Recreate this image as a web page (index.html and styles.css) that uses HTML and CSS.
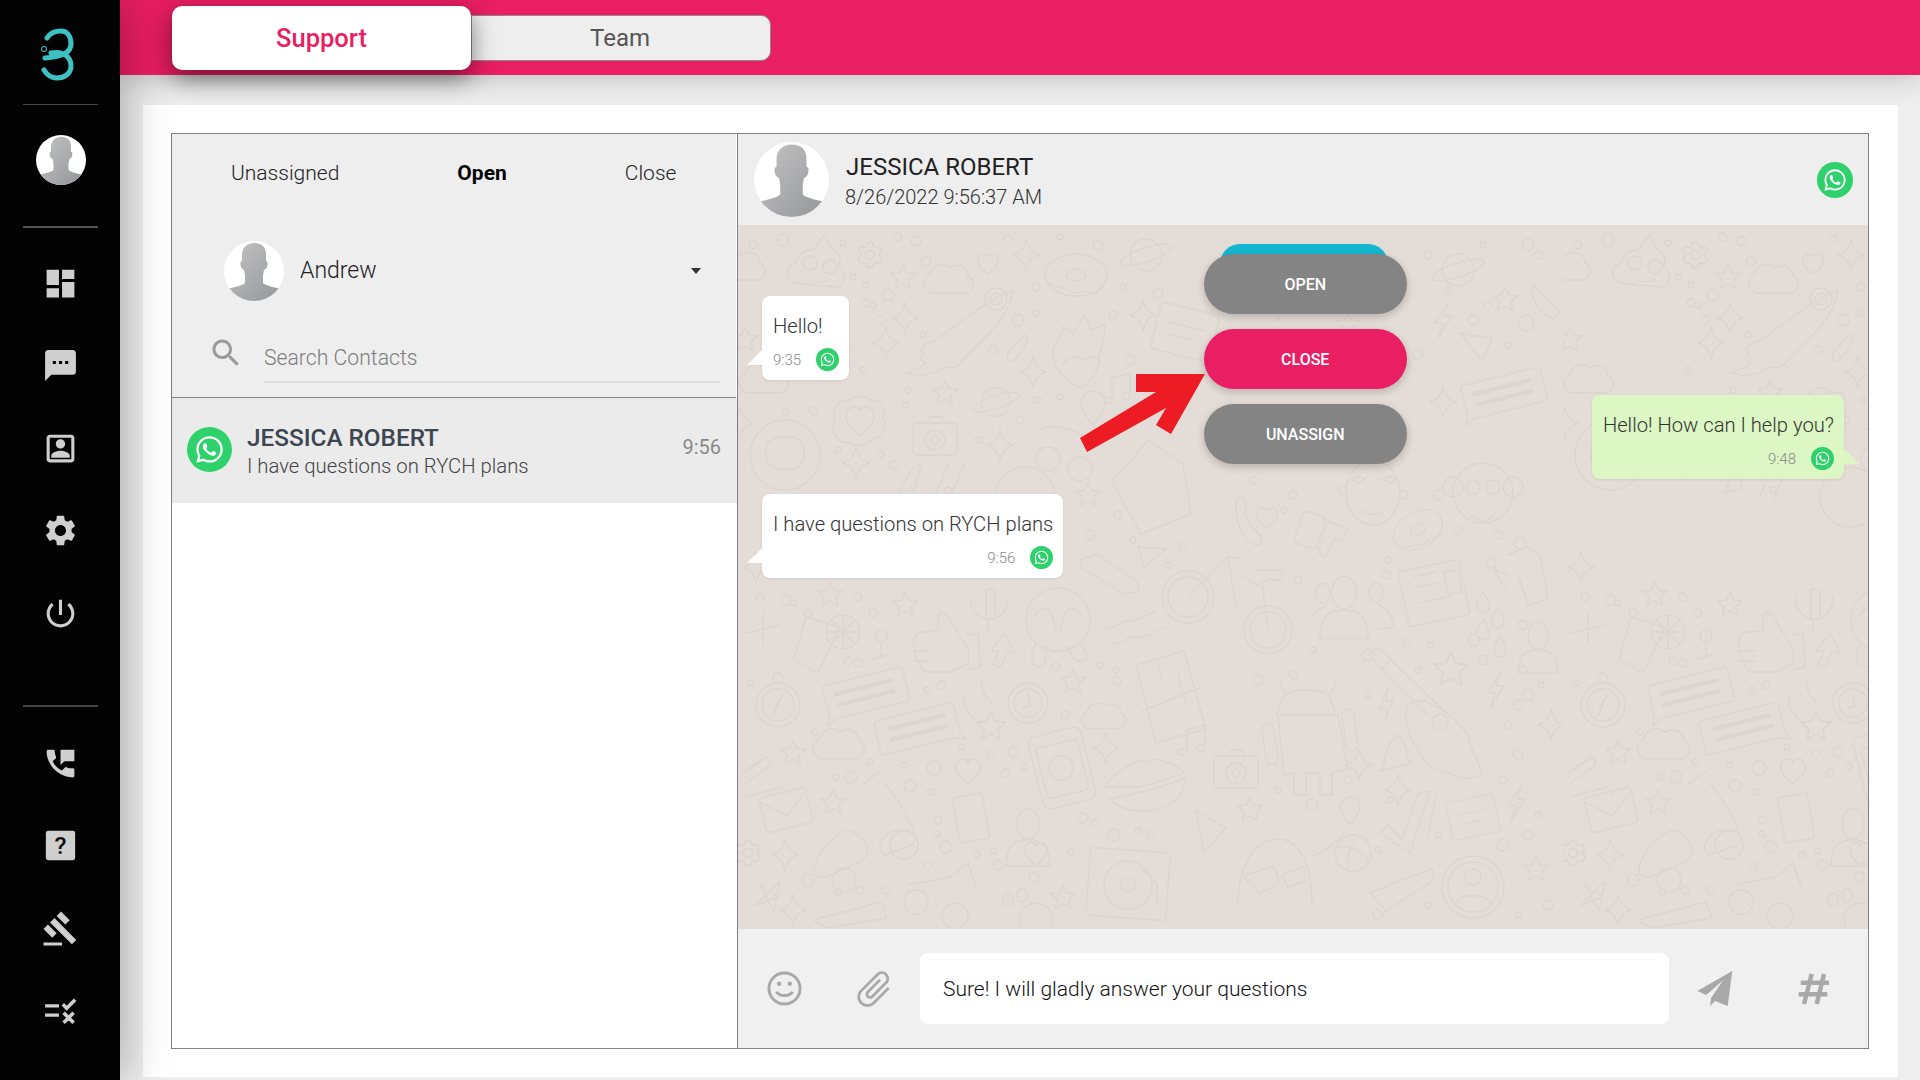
FILE: index.html
```html
<!DOCTYPE html>
<html lang="en">
<head>
    <meta charset="UTF-8">
    <meta name="viewport" content="width=device-width, initial-scale=1.0">
    <title>Support Chat</title>
    <link rel="stylesheet" href="styles.css">
</head>
<body>

    <!-- shared icons -->
    <svg class="defs" width="0" height="0" aria-hidden="true">
        <defs>
            <linearGradient id="silhouette" x1="0" y1="0" x2="1" y2="1">
                <stop offset="0" stop-color="#c4c4c4"/>
                <stop offset="1" stop-color="#929396"/>
            </linearGradient>
            <clipPath id="avatarClip"><circle cx="30" cy="30" r="30"/></clipPath>
            <symbol id="avatar" viewBox="0 0 60 60">
                <circle cx="30" cy="30" r="30" fill="#fff"/>
                <g clip-path="url(#avatarClip)" fill="url(#silhouette)">
                    <path d="M18 14c0-8 6-12 12-12 8 0 12 4 12 12 0 2 0 4 0 6 2 0 2 3 1 6-1 2-2 2-3 3-1 4-1 6-1 8v5c2 2 8 4 19 6v18H2V48c11-2 17-4 19-6v-5c0-2 0-4-1-8-1-1-2-1-3-3-1-3-1-6 1-6z"/>
                </g>
            </symbol>
            <symbol id="whatsapp" viewBox="0 0 44 44">
                <circle cx="22" cy="22" r="22" fill="#2fd16c"/>
                <path transform="translate(9 9) scale(1.083)" fill="#fff" d="M17.472 14.382c-.297-.149-1.758-.867-2.03-.967-.273-.099-.471-.148-.67.15-.197.297-.767.966-.94 1.164-.173.199-.347.223-.644.075-.297-.15-1.255-.463-2.39-1.475-.883-.788-1.48-1.761-1.653-2.059-.173-.297-.018-.458.13-.606.134-.133.298-.347.446-.52.149-.174.198-.298.298-.497.099-.198.05-.371-.025-.52-.075-.149-.669-1.612-.916-2.207-.242-.579-.487-.5-.669-.51-.173-.008-.371-.01-.57-.01-.198 0-.52.074-.792.372-.272.297-1.04 1.016-1.04 2.479 0 1.462 1.065 2.875 1.213 3.074.149.198 2.096 3.2 5.077 4.487.709.306 1.262.489 1.694.625.712.227 1.36.195 1.871.118.571-.085 1.758-.719 2.006-1.413.248-.694.248-1.289.173-1.413-.074-.124-.272-.198-.57-.347m-5.421 7.403h-.004a9.87 9.87 0 01-5.031-1.378l-.361-.214-3.741.982.998-3.648-.235-.374a9.86 9.86 0 01-1.51-5.26c.001-5.45 4.436-9.884 9.888-9.884 2.64 0 5.122 1.03 6.988 2.898a9.825 9.825 0 012.893 6.994c-.003 5.45-4.437 9.884-9.885 9.884m8.413-18.297A11.815 11.815 0 0012.05 0C5.495 0 .16 5.335.157 11.892c0 2.096.547 4.142 1.588 5.945L.057 24l6.305-1.654a11.882 11.882 0 005.683 1.448h.005c6.554 0 11.89-5.335 11.893-11.893a11.821 11.821 0 00-3.48-8.413z"/>
            </symbol>
            <path id="gearPath" d="M19.14 12.94c.04-.3.06-.61.06-.94 0-.32-.02-.64-.07-.94l2.03-1.58a.49.49 0 0 0 .12-.61l-1.92-3.32a.488.488 0 0 0-.59-.22l-2.39.96c-.5-.38-1.03-.7-1.62-.94l-.36-2.54a.484.484 0 0 0-.48-.41h-3.84c-.24 0-.43.17-.47.41l-.36 2.54c-.59.24-1.13.57-1.62.94l-2.39-.96c-.22-.08-.47 0-.59.22L2.74 8.87c-.12.21-.08.47.12.61l2.03 1.58c-.05.3-.09.63-.09.94s.02.64.07.94l-2.03 1.58a.49.49 0 0 0-.12.61l1.92 3.32c.12.22.37.29.59.22l2.39-.96c.5.38 1.03.7 1.62.94l.36 2.54c.05.24.24.41.48.41h3.84c.24 0 .44-.17.47-.41l.36-2.54c.59-.24 1.13-.56 1.62-.94l2.39.96c.22.08.47 0 .59-.22l1.92-3.32c.12-.22.07-.47-.12-.61l-2.01-1.58zM12 15.6c-1.98 0-3.6-1.62-3.6-3.6s1.62-3.6 3.6-3.6 3.6 1.62 3.6 3.6-1.62 3.6-3.6 3.6z"/>
        </defs>
    </svg>

    <aside class="sidebar">
        <div class="logo">
            <svg width="120" height="104" viewBox="0 0 120 104" fill="none" stroke="#3cc2c2" stroke-width="5" stroke-linecap="round">
                <path d="M47 38c3-5 9-7 14-7 6 0 10 5 10 13 0 9-10 13-26 14"/>
                <path d="M51 53c10-2 20 2 20 13 0 8-7 12-14 12-5 0-10-3-13-8"/>
                <circle cx="44" cy="49" r=".5"/>
            </svg>
        </div>
        <div class="side-avatar">
            <svg class="avatar-50"><use href="#avatar"/></svg>
        </div>
        <nav class="nav-top">
            <a class="nav-item"><svg class="nav-icon" viewBox="0 0 24 24"><path d="M3 13h8V3H3v10zm0 8h8v-6H3v6zm10 0h8V11h-8v10zm0-18v6h8V3h-8z"/></svg></a>
            <a class="nav-item"><svg class="nav-icon" viewBox="0 0 24 24"><path d="M20 2H4c-1.1 0-1.99.9-1.99 2L2 22l4-4h14c1.1 0 2-.9 2-2V4c0-1.1-.9-2-2-2zM9 11H7V9h2v2zm4 0h-2V9h2v2zm4 0h-2V9h2v2z"/></svg></a>
            <a class="nav-item"><svg class="nav-icon" viewBox="0 0 24 24"><path d="M19 5v14H5V5h14m0-2H5c-1.11 0-2 .9-2 2v14c0 1.1.89 2 2 2h14c1.1 0 2-.9 2-2V5c0-1.1-.9-2-2-2zm-7 9c1.65 0 3-1.35 3-3s-1.35-3-3-3-3 1.35-3 3 1.35 3 3 3zm-6 6h12v-1.5c0-2-4-3.1-6-3.1s-6 1.1-6 3.1V18z"/></svg></a>
            <a class="nav-item"><svg class="nav-icon" viewBox="0 0 24 24"><use href="#gearPath"/></svg></a>
            <a class="nav-item"><svg class="nav-icon" viewBox="0 0 24 24"><path d="M13 3h-2v10h2V3zm4.83 2.17l-1.42 1.42C17.99 7.86 19 9.81 19 12c0 3.87-3.13 7-7 7s-7-3.13-7-7c0-2.19 1.01-4.14 2.58-5.42L6.17 5.17C4.23 6.82 3 9.26 3 12c0 4.97 4.03 9 9 9s9-4.03 9-9c0-2.74-1.23-5.18-3.17-6.83z"/></svg></a>
        </nav>
        <nav class="nav-bottom">
            <a class="nav-item"><svg class="nav-icon" viewBox="0 0 24 24"><path d="M6.9 10.6c1.3 2.6 3.4 4.7 6 6l2-2c.3-.3.7-.4 1-.2 1 .4 2.5 1 4.1.6.6 0 1 .4 1 1V20c0 .6-.4 1-1 1C10.9 21 3 13.1 3 4c0-.6.4-1 1-1h3.3c.6 0 1 .4 1 1 0 1.500.5 2.700.8 3.800.1.300 0 .700-.200 1zM12 3h9v7.500h-6.500L12 13z"/></svg></a>
            <a class="nav-item"><svg class="nav-icon" viewBox="0 0 24 24"><rect x="2.500" y="2.500" width="19" height="19" rx="1.500"/><text class="help-mark" x="12" y="17.500" text-anchor="middle">?</text></svg></a>
            <a class="nav-item"><svg class="nav-icon" viewBox="0 0 24 24"><path d="M1 21h12v2H1v-2zM5.245 8.070l2.830-2.827 14.140 14.142-2.828 2.828L5.245 8.070zM12.317 1l5.657 5.656-2.830 2.830-5.654-5.660L12.317 1zM3.825 9.485l5.657 5.657-2.828 2.828-5.657-5.657 2.828-2.828z"/></svg></a>
            <a class="nav-item"><svg class="nav-icon" viewBox="0 0 24 24"><path d="M2 8h9v2H2zM2 14h9v2H2z"/><path class="tick" d="M13.500 8l2.500 2.500 5.500-5.500M14 13.500l6.500 6.500M20.500 13.500L14 20"/></svg></a>
        </nav>
    </aside>

    <main class="main">
        <header class="topbar">
            <button class="top-tab active">Support</button>
            <button class="top-tab">Team</button>
        </header>

        <div class="content">
            <div class="card">
                <div class="panel">

                    <section class="contacts">
                        <div class="contacts-head">
                            <div class="status-tabs">
                                <span>Unassigned</span>
                                <span class="current">Open</span>
                                <span>Close</span>
                            </div>
                            <div class="agent">
                                <svg class="avatar-60"><use href="#avatar"/></svg>
                                <span class="agent-name">Andrew</span>
                                <span class="caret"></span>
                            </div>
                            <div class="search">
                                <svg class="search-icon" viewBox="0 0 24 24"><path d="M15.500 14h-.790l-.280-.270C15.410 12.590 16 11.110 16 9.500 16 5.910 13.090 3 9.500 3S3 5.910 3 9.500 5.910 16 9.500 16c1.610 0 3.090-.590 4.230-1.570l.270.280v.790l5 4.990L20.490 19l-4.990-5zm-6 0C7.010 14 5 11.990 5 9.500S7.010 5 9.500 5 14 7.010 14 9.500 11.990 14 9.500 14z"/></svg>
                                <div class="search-box">Search Contacts</div>
                            </div>
                        </div>
                        <div class="contact-row">
                            <svg class="wa-45"><use href="#whatsapp"/></svg>
                            <div class="contact-text">
                                <div class="contact-name">JESSICA ROBERT</div>
                                <div class="contact-last">I have questions on RYCH plans</div>
                            </div>
                            <div class="contact-time">9:56</div>
                        </div>
                    </section>

                    <section class="conversation">
                        <div class="chat-head">
                            <svg class="avatar-75"><use href="#avatar"/></svg>
                            <div class="chat-title">
                                <div class="chat-name">JESSICA ROBERT</div>
                                <div class="chat-date">8/26/2022 9:56:37 AM</div>
                            </div>
                            <svg class="wa-36"><use href="#whatsapp"/></svg>
                        </div>

                        <div class="chat-body">
                            <svg class="wallpaper" aria-hidden="true">
                                <defs>
                                    <path id="dStar" d="M0-13L3.500-4.900 12.400-4 5.700 1.900 7.600 10.500 0 6-7.600 10.500-5.700 1.900-12.400-4-3.500-4.900z"/>
                                    <path id="dSpark" d="M0-16Q2-3 13 0 2 3 0 16-2 3-13 0-2-3 0-16z"/>
                                    <path id="dCloud" d="M-18 13a10 10 0 0 1-2-19 12 12 0 0 1 20-6 11 11 0 0 1 18 8 9 9 0 0 1-2 17z"/>
                                    <path id="dHeart" d="M0 11C-16 0-10-11-3-9-1-8.500 0-7 0-6 0-7 1-8.500 3-9 10-11 16 0 0 11z"/>
                                    <g id="dPlanet"><circle r="16"/><ellipse rx="27" ry="7" transform="rotate(-18)"/></g>
                                    <g id="dBubble"><path d="M-38-17H38a4 4 0 0 1 4 4V14a4 4 0 0 1-4 4H-34l-10 5 4-9V-13a4 4 0 0 1 2-4z"/><path d="M-28-6H28M-28 5H28" stroke-width="4.500"/></g>
                                    <g id="dEnvelope"><rect x="-24" y="-18" width="48" height="36" rx="3"/><path d="M-24-14 0 6 24-14"/></g>
                                    <g id="dCamera"><rect x="-22" y="-14" width="44" height="32" rx="4"/><circle cy="3" r="10"/><circle cy="3" r="4"/><path d="M-8-14l3-6H7l3 6"/></g>
                                    <g id="dClock"><circle r="20"/><circle r="14"/><path d="M0-10 2 3-5 5"/></g>
                                    <g id="dCompass"><circle r="22"/><circle r="16"/><circle cy="-27" r="5"/><path d="M5-11-5 11-1-2z"/></g>
                                    <g id="dGear"><use href="#gearPath" transform="scale(1.300) translate(-12 -12)"/></g>
                                    <g id="dDonut"><ellipse rx="31" ry="21"/><ellipse rx="10" ry="6"/><path d="M-30 4c6 12 16 4 22 12 8 6 14-4 22 2 8 2 14-6 16-16"/></g>
                                    <g id="dCard"><rect x="-30" y="-24" width="60" height="48" rx="4"/><path d="M-18-6H18M-18 6H8"/></g>
                                    <g id="dPerson"><ellipse cy="-16" rx="11" ry="15"/><path d="M-22 26c0-22 10-26 22-26s22 4 22 26z"/></g>
                                    <path id="dBolt" d="M6-18-8 3H0L-5 18 9-4H1z"/>
                                    <path id="dDrop" d="M0-11C5-3 6 0 6 4A6 6 0 0 1-6 4C-6 0-5-3 0-11z"/>
                                    <path id="dNote" d="M-8 12V-10L10-15V8M-8 12a4 3 0 1 1-8 0 4 3 0 1 1 8 0zM10 8a4 3 0 1 1-8 0 4 3 0 1 1 8 0z"/>
                                    <pattern id="doodle" patternUnits="userSpaceOnUse" width="825" height="703">
                                        <g class="doodle-lines">
                                            <!-- top band -->
                                            <path d="M58 58c-10-2-12-16 0-20 4-14 14-12 18-14l10-14 8 14c8 4 10 10 6 18 10 6 8 20-4 20z"/>
                                            <circle cx="72" cy="38" r="7"/><circle cx="92" cy="42" r="7"/><path d="M72 54c6 4 14 4 20 0"/>
                                            <use href="#dGear" x="132" y="30"/>
                                            <use href="#dCloud" x="212" y="55"/>
                                            <use href="#dHeart" x="250" y="38"/>
                                            <use href="#dSpark" x="288" y="30"/>
                                            <use href="#dDonut" x="338" y="50"/>
                                            <use href="#dPlanet" x="408" y="30"/>
                                            <use href="#dStar" x="165" y="53"/>
                                            <use href="#dSpark" x="405" y="90"/>
                                            <use href="#dSpark" x="167" y="93"/>
                                            <use href="#dSpark" x="148" y="118"/>
                                            <path d="M168 148c8-4 16-6 20-10-6-2-6-6-2-10-6-4 0-10 10-12l42-30c16-12 36-22 36-20 2 6-8 28-24 44l-26 26c-2 6-12 8-18 6-10 8-24 10-38 6z"/>
                                            <circle cx="258" cy="74" r="11"/><circle cx="258" cy="74" r="6"/>
                                            <path d="M270 128c8-10 14-16 18-18 4 6-4 18-14 26-4 2-6-4-4-8z"/>
                                            <path d="M343 163c-22-10-30-26-28-38 2-10 10-14 10-24l10 8 12-20 6 16 14-6c0 16-4 24-6 30 2 14-8 28-18 34zM325 140c6-10 14-10 20-4 6-6 14-6 18 2"/>
                                            <use href="#dCard" transform="translate(447 107) rotate(14)"/>
                                            <use href="#dSpark" x="295" y="147"/>
                                            <use href="#dStar" x="207" y="168"/>
                                            <use href="#dPlanet" transform="translate(258 177) scale(.9)"/>
                                            <use href="#dNote" x="382" y="163"/>
                                            <path d="M355 200c-10-12-12-18-12-22a12 12 0 0 1 24 0c0 4-2 10-12 22z"/>
                                            <path d="M97 195c-6-12 8-22 14-20 8-6 16-4 20 0 10-2 18 8 14 18 6 10-2 20-10 20-4 8-18 10-24 4-10 2-20-8-14-22z"/>
                                            <use href="#dHeart" transform="translate(122 195) scale(1.400)"/>
                                            <use href="#dCamera" x="197" y="212"/>
                                            <path d="M300 205c14-6 34-4 50 10M310 222a12 12 0 1 0 .1 0zM342 232a12 12 0 1 0 .1 0z"/>
                                            <use href="#dSpark" x="262" y="220"/>
                                            <circle cx="47" cy="230" r="35"/>
                                            <rect x="28" y="212" width="38" height="32" rx="14"/>
                                            <use href="#dSpark" x="118" y="238"/>
                                            <path d="M410 215l35 24 8 50-50 20-30-54 12-10z"/>
                                            <path d="M173 245l10-6-6 26-16 2zM212 235l-16 38M226 240l-16 36"/>
                                            <circle cx="287" cy="272" r="30"/>
                                            <use href="#dStar" x="350" y="270"/>
                                            <path d="M400 322l28 2-22 18z"/>
                                            <path d="M342 335l16-6 42 28 0 10-14 2-42-26z"/>
                                            <circle cx="450" cy="372" r="26"/><circle cx="450" cy="372" r="20"/>
                                            <path d="M450 372l40-40 14 2M490 332l8 50"/>
                                            <!-- middle band -->
                                            <use href="#dStar" x="92" y="370"/>
                                            <use href="#dStar" x="167" y="380"/>
                                            <path d="M248 395v-30a9 9 0 0 1 9 0v26M232 372c0 16 12 22 20 22s18-6 18-22M250 394v12"/>
                                            <path d="M176 414c0-5 6-8 14-7l10-2c0-10 0-16 4-18 8 2 10 14 22 30 4 6 6 10 4 22l-18 8h-22c-4 0-8-4-8-8-4-4-8-16-6-25zM230 410l10-2 2 34-10 2M176 426h16M176 436h16"/>
                                            <path d="M255 440l6-14-8 0 14-18 10 20-8-2-6 16z"/>
                                            <circle cx="320" cy="395" r="32"/>
                                            <path d="M296 392c4-8 10-10 16-6l6 18M344 392c-4-8-10-10-16-6l-6 18M304 420c8 8 24 8 32 0M298 418c-6 8-6 22 2 24s8-12 8-18M340 418c8 6 12 16 4 18s-12-8-14-14"/>
                                            <path d="M368 404c10-2 14-6 18-8 8 2 20-4 32-10M372 420c8-2 16-4 20-8 10 2 22-2 34-10"/>
                                            <path d="M25 388v32M8 408l34-8"/>
                                            <path d="M68 392l34 10-22 46-24-14z"/>
                                            <circle cx="105" cy="407" r="17"/><path d="M105 390v34M88 407h34M93 395l24 24M117 395l-24 24"/>
                                            <circle cx="143" cy="411" r="6"/><path d="M143 417v14M135 434l14-4"/>
                                            <path d="M398 440l48-14 22 78-50 14z"/><path d="M404 486l60-24M420 440l4 18M440 450l8 30"/>
                                            <use href="#dCompass" x="40" y="480"/>
                                            <use href="#dBubble" transform="translate(127 468) rotate(-14)"/>
                                            <use href="#dBubble" transform="translate(180 503) rotate(-14) scale(-1 1)"/>
                                            <path d="M228 470c-4 4-4 12 8 24M246 454c-4 4-4 12 8 24"/>
                                            <use href="#dClock" x="290" y="478"/>
                                            <use href="#dStar" x="335" y="457"/>
                                            <use href="#dCloud" transform="translate(367 492) scale(.9)"/>
                                            <use href="#dStar" transform="translate(253 502) scale(1.200)"/>
                                            <use href="#dCloud" transform="translate(102 520) scale(1.050)"/>
                                            <use href="#dStar" x="55" y="528"/>
                                            <path d="M2 552l24-18c6-4 8 4 4 8l-22 16M6 546l22-14"/>
                                            <use href="#dHeart" transform="translate(230 545) scale(1.200)"/>
                                            <rect x="297" y="506" width="54" height="74" rx="7" transform="rotate(-14 324 543)"/>
                                            <rect x="303" y="518" width="42" height="52" rx="3" transform="rotate(-14 324 543)"/>
                                            <circle cx="323" cy="543" r="12"/>
                                            <path d="M365 562c12-12 24-24 36-26 6 2 10 2 14-2 14 2 26 8 32 14-14 2-30 12-46 14zM372 574c24-6 52-10 76-22-2 22-20 34-40 34s-28-4-36-12z"/>
                                            <use href="#dSpark" x="368" y="523"/>
                                            <use href="#dNote" x="457" y="515"/>
                                            <use href="#dEnvelope" transform="translate(48 585) rotate(-14)"/>
                                            <path d="M8 572l36-10 6 8"/>
                                            <use href="#dStar" x="95" y="578"/>
                                            <path d="M76 646c0-14 14-30 30-40 4-2 14 0 22 14 4 6 0 14-8 18l-32 14c-6 0-12 0-12-6zM124 560l22-16M146 558c10 10 24 32 30 50 4 6 0 12-6 14l-24 8c-6-4-6-10 0-18 8-8 20-8 26-6"/>
                                            <circle cx="106" cy="655" r="12"/><circle cx="166" cy="620" r="14"/>
                                            <rect x="218" y="570" width="30" height="46" rx="3" transform="rotate(-10 233 593)"/>
                                            <use href="#dPerson" x="290" y="615"/>
                                            <use href="#dHeart" transform="translate(298 628) scale(1.100)"/>
                                            <path d="M458 585l30 18-22 24z"/>
                                            <rect x="350" y="625" width="80" height="68" rx="4" transform="rotate(4 390 660)"/>
                                            <circle cx="390" cy="660" r="24"/><circle cx="390" cy="660" r="7"/>
                                            <path d="M405 645l14 14v22"/>
                                            <use href="#dGear" x="10" y="628"/>
                                            <use href="#dSpark" x="47" y="630"/>
                                            <path d="M18 680l24-24-6 30-14-26 18 12z"/>
                                            <use href="#dStar" x="325" y="673"/>
                                            <path d="M170 660l42-8 18-14 8 24M178 665a12 12 0 1 0 .1 0zM217 678a13 13 0 1 0 .1 0z"/>
                                            <circle cx="298" cy="695" r="17"/><ellipse cx="270" cy="675" rx="5" ry="7"/><ellipse cx="284" cy="670" rx="5" ry="7"/>
                                            <use href="#dSpark" x="55" y="685"/>
                                            <path d="M75 695l68-18 6 16-60 10z"/>
                                            <!-- right part of the tile -->
                                            <path d="M635 236a27 32 0 1 1-.1 0zM620 258l-7-4 7-3 7 3zM652 258l-7-4 7-3 7 3zM623 285c6 6 18 6 24 0"/>
                                            <path d="M498 276c6-6 10-2 10 6-2 8 0 14 12 26 6 6 4 12-2 12-12-2-22-24-20-44z"/>
                                            <use href="#dHeart" x="529" y="292"/>
                                            <rect x="560" y="288" width="24" height="34" rx="6" transform="rotate(20 572 305)"/>
                                            <path d="M590 296l20 8-6 12-8-2-8 18-8-4z"/>
                                            <use href="#dDonut" transform="translate(680 305) rotate(-30) scale(.85)"/>
                                            <ellipse cx="745" cy="268" rx="30" ry="30"/><circle cx="735" cy="262" r="7"/><circle cx="755" cy="262" r="7"/>
                                            <circle cx="715" cy="262" r="10"/><circle cx="775" cy="262" r="10"/><path d="M735 290c6 8 14 8 20 0"/>
                                            <rect x="665" y="340" width="62" height="56" rx="3" transform="rotate(-12 696 368)"/>
                                            <path d="M676 352l22-5M680 362l18-4M682 378l32-7"/><rect x="708" y="346" width="14" height="22" transform="rotate(-10 715 357)"/>
                                            <path d="M770 330l18-8 14 8 8 44-20 6-10-30M770 350l-14-6 14 24"/>
                                            <use href="#dSpark" x="18" y="342"/>
                                            <use href="#dPerson" transform="translate(606 385) scale(1.100)"/>
                                            <ellipse cx="585" cy="368" rx="7" ry="10"/><ellipse cx="638" cy="368" rx="7" ry="10"/>
                                            <path d="M575 392c4-8 10-10 14-12M640 380c8 2 14 10 16 22l-14 2"/>
                                            <circle cx="530" cy="405" r="24"/><circle cx="530" cy="405" r="18"/>
                                            <path d="M530 405l-6-48 12-4M520 345h24v10h-14M528 365l-30-18"/>
                                            <use href="#dDrop" x="745" y="378"/><use href="#dDrop" x="760" y="393"/><use href="#dDrop" x="745" y="405"/><use href="#dDrop" x="762" y="422"/>
                                            <use href="#dPerson" transform="translate(800 425) scale(.9)"/>
                                            <use href="#dStar" transform="translate(713 445) scale(1.400)"/>
                                            <use href="#dBolt" x="757" y="465"/>
                                            <use href="#dBolt" transform="translate(648 480) scale(.9) rotate(-14)"/>
                                            <path d="M640 440l50 50M650 432l52 50"/>
                                            <path d="M630 430l10-8 14 12-10 10zM670 480c6-6 18-6 24 0 14 4 26 18 36 30 2 14 10 24 14 38-8 8-24 6-32 0-14 0-28-12-32-24-10-14-16-32-10-44z"/>
                                            <circle cx="702" cy="497" r="8"/>
                                            <path d="M540 490h60l10 54-16 4v22H582v-22h-14v22H556v-22l-10 2z"/>
                                            <path d="M546 470c8-6 38-8 46 2l6 18h-60zM548 470l-6-12M592 470l6-12"/>
                                            <rect x="526" y="498" width="12" height="42" rx="6" transform="rotate(-8 532 519)"/>
                                            <rect x="606" y="484" width="12" height="42" rx="6" transform="rotate(-8 612 505)"/>
                                            <path d="M660 510c-8 4-12 14-14 30l-4 6 32-8-4-4c-2-12-4-20-10-24z"/>
                                            <use href="#dSpark" x="621" y="540"/>
                                            <use href="#dSpark" x="813" y="500"/>
                                            <use href="#dSpark" x="660" y="565"/>
                                            <use href="#dCamera" x="498" y="545"/>
                                            <use href="#dStar" x="512" y="585"/>
                                            <path d="M612 600c-8-10-10-14-10-18a10 10 0 0 1 20 0c0 4-2 8-10 18z"/>
                                            <path d="M650 600l14 14 16-46 12-2-20 62-30-20zM690 612l8-42"/>
                                            <use href="#dCard" transform="translate(735 592) rotate(-12) scale(.8)"/>
                                            <use href="#dBolt" x="778" y="578"/>
                                            <path d="M500 680c0-44 20-66 40-66s34 22 34 66M574 632c14-6 24-14 32-24M506 652c8-6 22-8 30-10l6 16-20 10zM544 650l22-8 2 14-18 6z"/>
                                            <circle cx="615" cy="628" r="18"/><path d="M598 622c10-2 26 2 32 14M622 611c-10 6-14 20-12 34"/>
                                            <path d="M632 668c8-4 14-4 18-8l44-16c2 4 2 8 0 12l-46 30z"/>
                                            <circle cx="735" cy="662" r="31"/><circle cx="735" cy="662" r="25"/><circle cx="735" cy="652" r="8"/><path d="M718 678c4-10 30-10 34 0"/>
                                            <use href="#dStar" x="798" y="645"/>
                                            <!-- right top of the tile, seen above the green bubble -->
                                            <use href="#dPlanet" x="720" y="45"/>
                                            <use href="#dBolt" x="705" y="95"/>
                                            <path d="M722 108l32 6-10 22z"/>
                                            <use href="#dBubble" transform="translate(765 168) rotate(-14)"/>
                                            <use href="#dSpark" x="705" y="177"/>
                                            <use href="#dStar" x="767" y="75"/>
                                            <use href="#dCloud" x="4" y="42"/>
                                            <use href="#dStar" x="7" y="115"/>
                                            <use href="#dCloud" x="27" y="155"/>
                                            <use href="#dSpark" x="2" y="198"/>
                                            <path d="M795 60c8 4 14 18 24 24 4 4-2 12-8 8-10-6-20-20-16-32z"/>
                                            <path d="M520 140c-8-4-10-12-4-18 0-8 10-12 16-8 6-6 16-4 18 2 8 0 12 10 6 16-2 8-10 10-16 8z"/>
                                            <use href="#dStar" x="610" y="100"/>
                                            <use href="#dSpark" x="540" y="80"/>
                                        </g>
                                        <g class="doodle-dots">
                                            <circle cx="15" cy="20" r="4"/><circle cx="45" cy="15" r="6"/><circle cx="105" cy="18" r="3"/><circle cx="160" cy="12" r="4"/><circle cx="178" cy="16" r="5"/>
                                            <circle cx="188" cy="36" r="5"/><circle cx="150" cy="70" r="6"/><circle cx="128" cy="78" r="4"/><circle cx="128" cy="60" r="3"/><circle cx="115" cy="52" r="3"/>
                                            <circle cx="270" cy="14" r="4"/><circle cx="298" cy="62" r="4"/><circle cx="322" cy="12" r="3"/><circle cx="360" cy="20" r="5"/><circle cx="385" cy="62" r="3"/>
                                            <circle cx="420" cy="68" r="5"/><circle cx="375" cy="90" r="4"/><circle cx="280" cy="95" r="6"/><circle cx="298" cy="88" r="3"/><circle cx="255" cy="125" r="4"/>
                                            <circle cx="135" cy="80" r="3"/><circle cx="142" cy="95" r="4"/><circle cx="185" cy="110" r="3"/><circle cx="125" cy="145" r="3"/><circle cx="170" cy="165" r="3"/>
                                            <circle cx="392" cy="135" r="5"/><circle cx="420" cy="160" r="3"/><circle cx="300" cy="175" r="3"/><circle cx="322" cy="172" r="3"/><circle cx="75" cy="186" r="4"/>
                                            <circle cx="48" cy="187" r="3"/><circle cx="167" cy="180" r="3"/><circle cx="100" cy="225" r="3"/><circle cx="143" cy="230" r="3"/><circle cx="156" cy="240" r="4"/>
                                            <circle cx="210" cy="265" r="3"/><circle cx="240" cy="215" r="3"/><circle cx="282" cy="195" r="4"/><circle cx="380" cy="290" r="4"/><circle cx="352" cy="310" r="5"/>
                                            <circle cx="395" cy="315" r="3"/><circle cx="445" cy="320" r="4"/><circle cx="430" cy="340" r="3"/><circle cx="22" cy="372" r="4"/><circle cx="48" cy="375" r="5"/>
                                            <circle cx="70" cy="388" r="4"/><circle cx="55" cy="378" r="3"/><circle cx="135" cy="388" r="4"/><circle cx="120" cy="372" r="4"/><circle cx="110" cy="436" r="4"/>
                                            <circle cx="120" cy="438" r="4"/><circle cx="13" cy="458" r="3"/><circle cx="189" cy="465" r="3"/><circle cx="203" cy="460" r="4"/><circle cx="318" cy="442" r="4"/>
                                            <circle cx="362" cy="440" r="3"/><circle cx="379" cy="456" r="4"/><circle cx="378" cy="445" r="3"/><circle cx="327" cy="490" r="4"/><circle cx="77" cy="507" r="3"/>
                                            <circle cx="132" cy="537" r="3"/><circle cx="166" cy="540" r="3"/><circle cx="196" cy="543" r="7"/><circle cx="224" cy="522" r="3"/><circle cx="253" cy="528" r="4"/>
                                            <circle cx="275" cy="527" r="5"/><circle cx="267" cy="548" r="4"/><circle cx="286" cy="542" r="3"/><circle cx="113" cy="552" r="6"/><circle cx="98" cy="552" r="3"/>
                                            <circle cx="172" cy="561" r="6"/><circle cx="192" cy="567" r="3"/><circle cx="200" cy="595" r="4"/><circle cx="199" cy="609" r="3"/><circle cx="208" cy="622" r="6"/>
                                            <circle cx="239" cy="630" r="3"/><circle cx="255" cy="626" r="3"/><circle cx="260" cy="640" r="5"/><circle cx="345" cy="593" r="5"/><circle cx="357" cy="598" r="4"/>
                                            <circle cx="376" cy="610" r="6"/><circle cx="400" cy="606" r="3"/><circle cx="413" cy="608" r="4"/><circle cx="333" cy="627" r="3"/><circle cx="296" cy="652" r="5"/>
                                            <circle cx="70" cy="655" r="6"/><circle cx="100" cy="667" r="3"/><circle cx="122" cy="665" r="4"/><circle cx="148" cy="665" r="4"/><circle cx="190" cy="640" r="4"/>
                                            <circle cx="515" cy="255" r="4"/><circle cx="555" cy="270" r="4"/><circle cx="546" cy="285" r="3"/><circle cx="605" cy="265" r="4"/><circle cx="665" cy="270" r="4"/>
                                            <circle cx="700" cy="270" r="5"/><circle cx="720" cy="305" r="4"/><circle cx="760" cy="310" r="4"/><circle cx="782" cy="318" r="6"/><circle cx="753" cy="338" r="5"/>
                                            <circle cx="560" cy="355" r="4"/><circle cx="650" cy="335" r="3"/><circle cx="648" cy="350" r="4"/><circle cx="736" cy="415" r="6"/><circle cx="785" cy="400" r="5"/>
                                            <circle cx="555" cy="450" r="4"/><circle cx="520" cy="455" r="5"/><circle cx="575" cy="425" r="3"/><circle cx="630" cy="430" r="6"/><circle cx="669" cy="416" r="4"/>
                                            <circle cx="693" cy="420" r="3"/><circle cx="680" cy="445" r="3"/><circle cx="745" cy="435" r="5"/><circle cx="785" cy="445" r="4"/><circle cx="780" cy="480" r="5"/>
                                            <circle cx="803" cy="460" r="3"/><circle cx="790" cy="470" r="6"/><circle cx="770" cy="500" r="4"/><circle cx="780" cy="530" r="5"/><circle cx="630" cy="470" r="3"/>
                                            <circle cx="574" cy="580" r="6"/><circle cx="540" cy="565" r="3"/><circle cx="652" cy="575" r="3"/><circle cx="610" cy="555" r="4"/><circle cx="765" cy="555" r="4"/>
                                            <circle cx="800" cy="590" r="3"/><circle cx="765" cy="620" r="6"/><circle cx="790" cy="610" r="5"/><circle cx="640" cy="625" r="3"/><circle cx="700" cy="610" r="3"/>
                                            <circle cx="810" cy="680" r="5"/><circle cx="780" cy="690" r="3"/><circle cx="690" cy="680" r="3"/><circle cx="640" cy="690" r="5"/>
                                            <circle cx="690" cy="30" r="4"/><circle cx="745" cy="20" r="3"/><circle cx="790" cy="20" r="6"/><circle cx="800" cy="30" r="4"/><circle cx="750" cy="80" r="4"/>
                                            <circle cx="788" cy="98" r="8"/><circle cx="710" cy="65" r="3"/><circle cx="770" cy="120" r="3"/><circle cx="735" cy="95" r="5"/><circle cx="680" cy="130" r="5"/>
                                        </g>
                                    </pattern>
                                </defs>
                                <rect width="100%" height="100%" fill="url(#doodle)"/>
                            </svg>

                            <div class="bubble incoming">
                                <div class="bubble-text">Hello!</div>
                                <div class="bubble-meta"><span class="bubble-time">9:35</span><svg class="wa-23"><use href="#whatsapp"/></svg></div>
                            </div>
                            <div class="bubble outgoing">
                                <div class="bubble-text">Hello! How can I help you?</div>
                                <div class="bubble-meta"><span class="bubble-time">9:48</span><svg class="wa-23"><use href="#whatsapp"/></svg></div>
                            </div>
                            <div class="bubble incoming">
                                <div class="bubble-text">I have questions on RYCH plans</div>
                                <div class="bubble-meta"><span class="bubble-time">9:56</span><svg class="wa-23"><use href="#whatsapp"/></svg></div>
                            </div>

                            <!-- status menu, opened over the messages -->
                            <div class="status-menu">
                                <span class="status-back"></span>
                                <button class="status-btn">OPEN</button>
                                <button class="status-btn close">CLOSE</button>
                                <button class="status-btn">UNASSIGN</button>
                            </div>
                            <svg class="pointer" viewBox="0 0 126 78"><polygon points="126,0 57,0 57,18 77,18 1,64 8,78 87,34 77,51 92,60"/></svg>
                        </div>

                        <div class="composer">
                            <svg class="tool-smile" viewBox="0 0 36 36"><circle cx="18" cy="18" r="16"/><circle class="solid" cx="12.500" cy="13" r="2.300"/><circle class="solid" cx="23.500" cy="13" r="2.300"/><path d="M9.500 21.500c4 5 13 5 17 0"/></svg>
                            <svg class="tool-clip" viewBox="0 0 24 24"><path d="M16.500 6v11.500c0 2.210-1.790 4-4 4s-4-1.790-4-4V5c0-1.380 1.120-2.500 2.500-2.500s2.500 1.120 2.500 2.500v10.500c0 .550-.450 1-1 1s-1-.450-1-1V6H10v9.500c0 1.380 1.120 2.500 2.500 2.500s2.500-1.120 2.500-2.500V5c0-2.210-1.790-4-4-4S7 2.790 7 5v12.500c0 3.040 2.460 5.500 5.500 5.500s5.500-2.460 5.500-5.500V6h-1.500z"/></svg>
                            <div class="message-box">Sure! I will gladly answer your questions</div>
                            <svg class="tool-send" viewBox="0 0 36 36"><polygon points="35.300,0 .3,20 9.300,24 26,9.300 14,27 13,35 18,30 30.700,35"/></svg>
                            <svg class="tool-hash" viewBox="0 0 32 32"><path d="M13.700 1L6 31M26 1l-7.300 30M2.700 9.700H31M.7 21.300h28.600"/></svg>
                        </div>
                    </section>

                </div>
            </div>
        </div>
    </main>

</body>
</html>
```

FILE: styles.css
```css
* {
    box-sizing: border-box;
}
body {
    font-family: Roboto, "Liberation Sans", sans-serif;
    background-color: #eeeeee;
    margin: 0;
    height: 100vh;
    overflow: hidden;
    display: flex;
}
.defs {
    position: absolute;
}

/* sidebar */
.sidebar {
    width: 120px;
    flex: none;
    background-color: #030303;
    box-shadow: 0 0 50px rgba(0, 0, 0, 0.35);
    position: relative;
    z-index: 3;
}
.logo {
    height: 105px;
    border-bottom: 1px solid #444;
    margin: 0 22px 0 23px;
}
.logo svg {
    display: block;
    margin-left: -23px;
}
.side-avatar {
    height: 123px;
    margin: 0 22px 0 23px;
    border-bottom: 2px solid #555;
    display: flex;
    justify-content: center;
    align-items: flex-start;
    padding-top: 30px;
}
.avatar-50 {
    width: 50px;
    height: 50px;
}
.nav-top {
    padding: 14px 0 0;
    height: 479px;
    border-bottom: 2px solid #444;
    margin: 0 22.500px;
}
.nav-bottom {
    padding-top: 15px;
}
.nav-item {
    height: 82.500px;
    display: flex;
    justify-content: center;
    align-items: center;
}
.nav-icon {
    width: 37px;
    height: 37px;
    fill: #cfcfcf;
}
.help-mark {
    font-family: Roboto, sans-serif;
    font-size: 16px;
    font-weight: 500;
    fill: #111;
}
.tick {
    fill: none;
    stroke: #cfcfcf;
    stroke-width: 2.300;
}

/* top bar */
.main {
    flex: 1;
    min-width: 0;
    display: flex;
    flex-direction: column;
}
.topbar {
    height: 75px;
    flex: none;
    background-color: #e91e63;
    box-shadow: 0 0 30px rgba(0, 0, 0, 0.25);
    display: flex;
    align-items: center;
    padding-left: 52px;
    padding-top: 1px;
    position: relative;
    z-index: 2;
}
.top-tab {
    font-family: inherit;
    font-size: 24px;
    color: #555;
    width: 300px;
    height: 46px;
    padding-right: 8px;
    background-color: #eeeeee;
    border: 1px solid #8a8a8a;
    border-radius: 0 10px 10px 0;
}
.top-tab.active {
    width: 299px;
    height: 64px;
    padding-right: 6px;
    font-size: 25.500px;
    font-weight: 500;
    color: #e91e63;
    background-color: #fff;
    border: none;
    border-radius: 10px;
    box-shadow: 0 8px 24px rgba(0, 0, 0, 0.5);
    position: relative;
    z-index: 1;
}

/* page body */
.content {
    flex: 1;
    min-height: 0;
    padding: 30px 22px 3px 23px;
}
.card {
    height: 100%;
    background-color: #fff;
    padding: 28px 29px 28px 28px;
}
.panel {
    height: 100%;
    border: 1px solid #808080;
    display: flex;
}

/* contacts column */
.contacts {
    width: 566px;
    flex: none;
    border-right: 1px solid #808080;
}
.contacts-head {
    height: 264px;
    background-color: #eeeeee;
    border-bottom: 1px solid #808080;
    margin-right: 1px;
}
.status-tabs {
    display: flex;
    gap: 118px;
    padding: 26px 0 0 59px;
    font-size: 21px;
    font-weight: 300;
    line-height: 26px;
    color: #222;
}
.status-tabs .current {
    font-weight: 700;
    color: #000;
}
.agent {
    display: flex;
    align-items: center;
    margin-top: 55px;
    padding-left: 52px;
}
.avatar-60 {
    width: 60px;
    height: 60px;
}
.agent-name {
    font-size: 23px;
    font-weight: 300;
    color: #222;
    margin: 0 0 2px 16px;
    flex: 1;
}
.caret {
    border-left: 5px solid transparent;
    border-right: 5px solid transparent;
    border-top: 6px solid #333;
    margin-right: 35px;
}
.search {
    display: flex;
    padding-left: 36px;
    margin-top: 30px;
}
.search-icon {
    width: 36px;
    height: 36px;
    margin-top: 4px;
    fill: #9a9a9a;
    flex: none;
}
.search-box {
    width: 456px;
    height: 50px;
    margin: 2px 0 0 20px;
    padding-top: 12px;
    font-size: 21.200px;
    font-weight: 300;
    color: #7d7d7d;
    border-bottom: 2px solid #dedede;
}
.contact-row {
    height: 105px;
    background-color: #ebebeb;
    display: flex;
    padding: 29px 16px 0 15px;
}
.wa-45 {
    width: 45px;
    height: 45px;
    flex: none;
}
.contact-text {
    flex: 1;
    margin-left: 15px;
    margin-top: -4px;
}
.contact-name {
    font-size: 24.300px;
    font-weight: 500;
    line-height: 29px;
    color: #3c4650;
}
.contact-last {
    font-size: 20.300px;
    font-weight: 300;
    line-height: 28px;
    color: #444;
}
.contact-time {
    font-size: 20px;
    color: #888;
    margin-top: 8px;
}

/* conversation column */
.conversation {
    flex: 1;
    min-width: 0;
    display: flex;
    flex-direction: column;
}
.chat-head {
    height: 91px;
    flex: none;
    background-color: #eeeeee;
    display: flex;
    align-items: center;
    padding: 0 15px 0 16px;
}
.avatar-75 {
    width: 75px;
    height: 75px;
    flex: none;
}
.chat-title {
    flex: 1;
    margin-left: 17px;
    padding-top: 5px;
}
.chat-name {
    font-size: 24px;
    line-height: 30px;
    color: #222;
}
.chat-date {
    font-size: 20px;
    font-weight: 300;
    line-height: 30px;
    color: #333;
    margin-left: -1px;
}
.wa-36 {
    width: 36px;
    height: 36px;
    margin-top: 1px;
}
.chat-body {
    flex: 1;
    min-height: 0;
    background-color: #e4dcd6;
    position: relative;
    display: flex;
    flex-direction: column;
    align-items: flex-start;
    gap: 15px;
    padding: 71px 24px 0;
}
.wallpaper {
    position: absolute;
    left: 0;
    top: 0;
    width: 100%;
    height: 100%;
}
.doodle-lines {
    fill: none;
    stroke: #dcd4cd;
    stroke-width: 1.400;
    stroke-linejoin: round;
    stroke-linecap: round;
}
.doodle-dots {
    fill: none;
    stroke: #dcd4cd;
    stroke-width: 1.300;
}
.bubble {
    position: relative;
    height: 84px;
    background-color: #fff;
    border-radius: 8px;
    padding: 17px 10px 0 11px;
    box-shadow: 0 1px 3px rgba(0, 0, 0, 0.08);
}
.bubble::before {
    content: "";
    position: absolute;
    top: 54px;
    left: -15px;
    border-bottom: 15px solid #fff;
    border-left: 15px solid transparent;
}
.bubble.outgoing {
    align-self: flex-end;
    background-color: #dcf6c4;
}
.bubble.outgoing::before {
    left: auto;
    right: -15px;
    border-bottom-color: #dcf6c4;
    border-left: none;
    border-right: 15px solid transparent;
}
.bubble-text {
    font-size: 20.200px;
    font-weight: 300;
    line-height: 26px;
    color: #333;
    white-space: nowrap;
}
.bubble-meta {
    display: flex;
    justify-content: flex-end;
    align-items: center;
    gap: 15px;
    margin-top: 9px;
}
.bubble-time {
    font-size: 15px;
    font-weight: 300;
    color: #888;
}
.wa-23 {
    width: 23px;
    height: 23px;
}
.status-menu {
    position: absolute;
    left: 465.500px;
    top: 29px;
    width: 203.500px;
    display: flex;
    flex-direction: column;
    gap: 15px;
}
.status-back {
    position: absolute;
    left: 16px;
    right: 19px;
    top: -10px;
    height: 30px;
    background-color: #13b8d0;
    border-radius: 20px 20px 0 0;
}
.status-btn {
    position: relative;
    height: 60px;
    border: none;
    border-radius: 30px;
    background-color: #848484;
    color: #fff;
    font-family: inherit;
    font-size: 16px;
    font-weight: 500;
    box-shadow: 0 3px 8px rgba(0, 0, 0, 0.2);
}
.status-btn.close {
    background-color: #e91e63;
}
.pointer {
    position: absolute;
    left: 341px;
    top: 149px;
    width: 126px;
    height: 78px;
    fill: #ed1c24;
}

/* message composer */
.composer {
    height: 119px;
    flex: none;
    background-color: #f0f0f0;
    display: flex;
    align-items: center;
    padding-left: 29px;
}
.composer svg {
    flex: none;
}
.tool-smile {
    width: 35px;
    height: 35px;
    fill: none;
    stroke: #a9a9a9;
    stroke-width: 3;
}
.tool-smile .solid {
    fill: #a9a9a9;
    stroke: none;
}
.tool-clip {
    width: 44px;
    height: 44px;
    margin: 0 24px 0 50px;
    fill: #a9a9a9;
    transform: rotate(45deg);
}
.message-box {
    width: 749px;
    height: 71px;
    background-color: #fff;
    border-radius: 8px;
    padding-left: 23px;
    line-height: 73px;
    font-size: 21px;
    font-weight: 300;
    color: #111;
}
.tool-send {
    width: 36px;
    height: 36px;
    margin-left: 28px;
    fill: #a9a9a9;
}
.tool-hash {
    width: 32px;
    height: 32px;
    margin-left: 65px;
    fill: none;
    stroke: #a9a9a9;
    stroke-width: 4.500;
}
```
